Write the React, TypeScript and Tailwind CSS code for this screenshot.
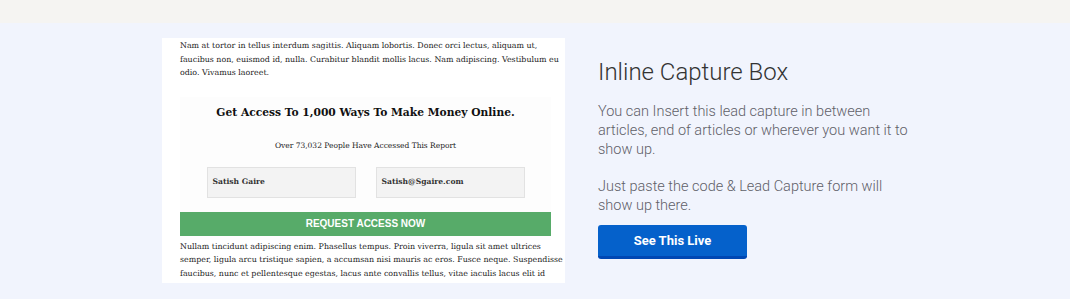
import React from "react";

const serif = { fontFamily: '"DejaVu Serif", "Liberation Serif", serif' };

const introLines = [
  "Nam at tortor in tellus interdum sagittis. Aliquam lobortis. Donec orci lectus, aliquam ut,",
  "faucibus non, euismod id, nulla. Curabitur blandit mollis lacus. Nam adipiscing. Vestibulum eu",
  "odio. Vivamus laoreet.",
];

const outroLines = [
  "Nullam tincidunt adipiscing enim. Phasellus tempus. Proin viverra, ligula sit amet ultrices",
  "semper, ligula arcu tristique sapien, a accumsan nisi mauris ac eros. Fusce neque. Suspendisse",
  "faucibus, nunc et pellentesque egestas, lacus ante convallis tellus, vitae iaculis lacus elit id",
  "tortor. Vivamus aliquet elit ac nisl. Fusce fermentum odio nec arcu. Vivamus euismod mauris.",
];

const ArticlePreview: React.FC = () => (
  <div
    className="h-[245px] w-[403px] shrink-0 overflow-hidden bg-white pl-[18px] pr-[14px] pt-[1px] text-[#222]"
    style={serif}
  >
    {/* Article text above */}
    <div className="text-[7.9px] leading-[13.5px]">
      {introLines.map((l) => (
        <p key={l} className="whitespace-nowrap">{l}</p>
      ))}
    </div>

    {/* Lead capture form */}
    <div className="mt-[17px] bg-[#fdfdfd] pb-[4px]">
      <h3 className="pt-[6px] text-center text-[10.7px] font-bold leading-[20px] text-[#111]">
        Get Access To 1,000 Ways To Make Money Online.
      </h3>
      <p className="mt-[16px] text-center text-[7.5px] leading-[14px] text-[#222]">
        Over 73,032 People Have Accessed This Report
      </p>
      <div className="mt-[14px] flex justify-center gap-[20px]">
        <div className="flex h-[31px] w-[149px] items-center border border-[#e2e2e2] bg-[#f3f3f3] px-[5px] text-[7.6px] font-bold text-[#333]">
          Satish Gaire
        </div>
        <div className="flex h-[31px] w-[149px] items-center border border-[#e2e2e2] bg-[#f3f3f3] px-[5px] text-[7.6px] font-bold text-[#333]">
          Satish@Sgaire.com
        </div>
      </div>
      <button
        className="mt-[14px] flex h-[24px] w-[371px] items-center justify-center bg-[#57ab69] text-[10px] font-bold text-white"
        style={{ fontFamily: '"Liberation Sans", Arial, sans-serif' }}
      >
        REQUEST ACCESS NOW
      </button>
    </div>

    {/* Article text below */}
    <div className="text-[7.9px] leading-[13.8px]">
      {outroLines.map((l) => (
        <p key={l} className="whitespace-nowrap">{l}</p>
      ))}
    </div>
  </div>
);

export default function App() {
  return (
    <div className="min-h-[299px] w-full bg-[#f1f4fd]" style={{ fontFamily: 'Roboto, "Noto Sans", sans-serif' }}>
      <div className="h-[23px] bg-[#f5f4f2]" />
      <section className="flex pl-[162px] pt-[15px]">
        <ArticlePreview />
        <div className="ml-[33px] pt-[16px]">
          <h2 className="text-[24px] font-light leading-[36px] text-[#333]">Inline Capture Box</h2>
          <p className="mt-[12px] w-[315px] text-[14.5px] font-light leading-[19px] text-[#5f6068]">
            You can Insert this lead capture in between articles, end of articles or wherever you want it to
            show up.
          </p>
          <p className="mt-[18px] w-[315px] text-[14.5px] font-light leading-[19px] text-[#5f6068]">
            Just paste the code &amp; Lead Capture form will show up there.
          </p>
          <button className="mt-[10px] flex h-[34px] w-[149px] items-center justify-center rounded-[3px] border-b-[3px] border-[#0047b3] bg-[#0561cb] text-[13px] font-bold text-white">
            See This Live
          </button>
        </div>
      </section>
    </div>
  );
}
